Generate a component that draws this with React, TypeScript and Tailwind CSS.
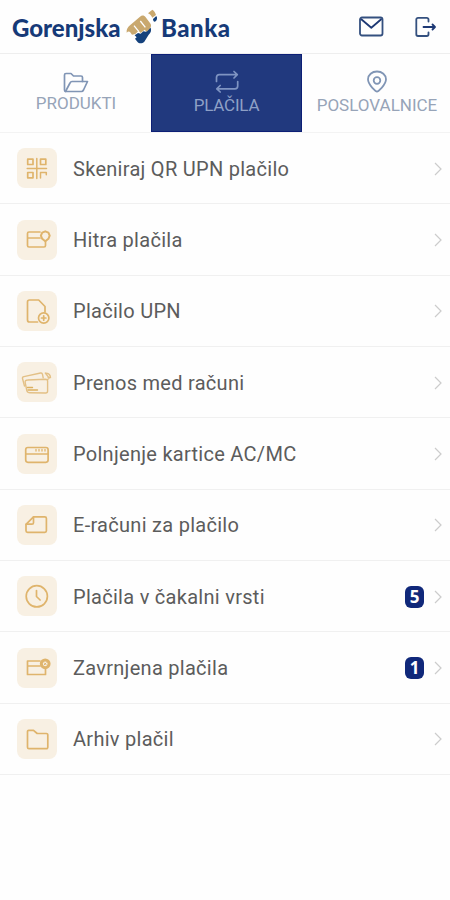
import type { ReactNode } from "react";

type Row = {
  label: string;
  icon: ReactNode;
  badge?: number;
};

function TileIcon({ children }: { children: ReactNode }) {
  return (
    <svg
      viewBox="0 0 40 40"
      className="h-10 w-10"
      fill="none"
      stroke="#dfb46c"
      strokeWidth={1.7}
      strokeLinecap="round"
      strokeLinejoin="round"
    >
      {children}
    </svg>
  );
}

const ROWS: Row[] = [
  {
    label: "Skeniraj QR UPN plačilo",
    icon: (
      <TileIcon>
        <path d="M10.7 11.2h5.3v5.3h-5.3zM23.500 11.2h5.3v5.3h-5.3zM10.700 24.500h5.3v5.3h-5.3z" />
        <path d="M19.800 10.500v20M10.200 20.500h19.300" strokeWidth={1.5} />
        <path d="M23.500 30v-5.500h5.800v2.300" strokeWidth={1.5} />
      </TileIcon>
    ),
  },
  {
    label: "Hitra plačila",
    icon: (
      <TileIcon>
        <path d="M23 12H12a1.5 1.5 0 0 0-1.5 1.5v12A1.5 1.5 0 0 0 12 27h15a1.5 1.5 0 0 0 1.5-1.5V21M10.5 18H23" />
        <path d="M28.3 11.3l3.1 1.3 1.3 3.1-1.3 3.1-3.1 2.5-3.1-2.5-1.3-3.1 1.3-3.1z" strokeWidth={2} />
      </TileIcon>
    ),
  },
  {
    label: "Plačilo UPN",
    icon: (
      <TileIcon>
        <path d="M20.5 31h-8a2 2 0 0 1-2-2V11a2 2 0 0 1 2-2h9.200l6.300 6.500V21" />
        <circle cx="26.7" cy="27" r="5.2" />
        <path d="M26.7 24.8v4.4M24.5 27h4.4" />
      </TileIcon>
    ),
  },
  {
    label: "Prenos med računi",
    icon: (
      <TileIcon>
        <g strokeWidth={1.4} stroke="#e3c086">
          <path d="M7.500 24L5.500 16.500c-.3-1 .4-1.700 1.400-1.900L23.500 11c1-.2 1.800.3 2 1.300l.7 3.500" />
          <path d="M10.500 18l17.800-.8c1.500 0 2.300.6 2.300 1.700v10.200c0 1.100-.8 1.900-1.900 1.900l-15.700-.2c-1.500 0-2.800-.8-3.200-2.200l-1.600-7.900c-.4-1.700.5-2.700 2.300-2.700z" />
          <path d="M10.500 25.500h5M11 28h9.500" stroke="#dcb060" />
          <path d="M28.300 11l3.200 4.200M29.500 11.300c2.500.3 3.800 1.700 4 4.200l-2.500-.3M30.500 17.500l1.500-1" />
        </g>
      </TileIcon>
    ),
  },
  {
    label: "Polnjenje kartice AC/MC",
    icon: (
      <TileIcon>
        <rect x="8.7" y="13.5" width="22.4" height="14.8" rx="2.2" />
        <path d="M9 20h22" />
        <path d="M19 15.500v1.500M22 15.500v1.500M25 15.500v1.500M28 15.500v1.500" strokeWidth={1.3} />
      </TileIcon>
    ),
  },
  {
    label: "E-računi za plačilo",
    icon: (
      <TileIcon>
        <path d="M16.500 11.800h11.300a1.600 1.600 0 0 1 1.600 1.600v12.400a1.600 1.600 0 0 1-1.600 1.600H10.600A1.600 1.600 0 0 1 9 25.800v-6.500z" />
        <path d="M16.500 12v5.700a1.500 1.500 0 0 1-1.500 1.500H9.300" />
      </TileIcon>
    ),
  },
  {
    label: "Plačila v čakalni vrsti",
    badge: 5,
    icon: (
      <TileIcon>
        <circle cx="19.8" cy="20.3" r="10.6" />
        <path d="M19.500 14.500v6l3.600 3.500" />
      </TileIcon>
    ),
  },
  {
    label: "Zavrnjena plačila",
    badge: 1,
    icon: (
      <TileIcon>
        <path d="M23 13H10.500v13.500h18V21M10.500 18H23" />
        <circle cx="28.2" cy="15.8" r="3.9" strokeWidth={3} />
        <path d="M27.2 14.8l2 2M29.2 14.8l-2 2" strokeWidth={1} />
      </TileIcon>
    ),
  },
  {
    label: "Arhiv plačil",
    icon: (
      <TileIcon>
        <path d="M10.500 12.500a1.200 1.200 0 0 1 1.200-1.200h4.800l3.700 3.200h9.200a1.400 1.400 0 0 1 1.400 1.400v12.400a1.400 1.400 0 0 1-1.400 1.400H12a1.500 1.500 0 0 1-1.500-1.500z" />
      </TileIcon>
    ),
  },
];

function LogoMark() {
  return (
    <svg viewBox="0 0 126 126" className="h-[42px] w-[42px] shrink-0">
      <path
        d="M38 88l10-7 8 2 8-7 8 1 10-11 4-1c3 9 0 15-6 21L67 107c-7 6-16 6-21 0l-7-9 5-4z"
        fill="#14417c"
      />
      <path
        d="M14 80c-1-10 3-16 10-22l30-26c6-5 13-4 17 2l13 17c5 6 4 12-1 17l-9 9-6-6-7 6-5 4-6-7-10 10-10 2-6-8c-3-3-6-2-10 2z"
        fill="#c9a86e"
      />
      <path d="M36 59l14 17M55 45l15 19" stroke="#fefefe" strokeWidth={4} />
      <path d="M78 22l13-11c6 4 9 9 11 16l-11 8c-3-6-7-10-13-13z" fill="#c9a86e" />
      <path d="M93 39l10-9c4 6 3 13-4 17-3 1-6-3-6-8z" fill="#14417c" />
    </svg>
  );
}

function Header() {
  return (
    <header className="flex h-[54px] items-center border-b border-[#eeeeee] px-3 text-[#163a78]">
      <div className="flex items-center font-['Lato',sans-serif] text-[24px] font-black leading-none">
        <span className="w-[110px] pt-[2px]">Gorenjska</span>
        <LogoMark />
        <span className="-ml-[3px] pt-[2px] tracking-[0.5px]">Banka</span>
      </div>
      <svg
        viewBox="0 0 28 24"
        className="ml-auto h-6 w-7"
        fill="none"
        stroke="#34507f"
        strokeWidth={1.8}
        strokeLinejoin="round"
      >
        <rect x="2" y="2.5" width="22.5" height="18" rx="2" />
        <path d="M3 4l10.300 8.700L23.500 4" stroke="#1d3874" />
      </svg>
      <svg
        viewBox="0 0 24 24"
        className="ml-7 h-6 w-6"
        fill="none"
        stroke="#34507f"
        strokeWidth={1.8}
        strokeLinecap="round"
        strokeLinejoin="round"
      >
        <path d="M14.500 6.500V4.500a1.700 1.700 0 0 0-1.700-1.700H4a1.700 1.700 0 0 0-1.700 1.700v14.800A1.700 1.700 0 0 0 4 21h8.800a1.700 1.700 0 0 0 1.700-1.700v-2" />
        <path d="M9.500 12h11M18.500 9.500l2.500 2.500-2.500 2.500" stroke="#1d3874" />
      </svg>
    </header>
  );
}

function Tabs() {
  return (
    <nav className="grid h-[79px] grid-cols-[151px_151px_148px] border-b border-[#f3f3f3] text-[17px] leading-5 text-[#97a4b8]">
      <div className="flex flex-col items-center pl-px pt-[17px]">
        <svg viewBox="0 0 26 22" className="h-[22px] w-[26px]" fill="none" stroke="#8095b5" strokeWidth={1.7} strokeLinejoin="round" strokeLinecap="round">
          <path d="M2.500 20.500c-.7-.2-1-.7-1-1.500V4c0-1 .5-1.500 1.500-1.500h5L10.500 5H18c1 0 1.500.5 1.500 1.500v4" />
          <path d="M2.500 20.500l4.500-8.500c.5-1 1-1.500 2-1.500h15.500l-4 8.500c-.5 1-1 1.500-2 1.500z" />
        </svg>
        <span>PRODUKTI</span>
      </div>
      <div className="flex flex-col items-center border border-[#0d1f76] bg-[#21397e] pt-[15px] text-[#8ea0c6]">
        <svg viewBox="0 0 24 24" className="h-6 w-6" fill="none" stroke="#7f94c2" strokeWidth={1.7} strokeLinejoin="round" strokeLinecap="round">
          <path d="M1.500 11.500V7.500c0-1.800 1-2.800 2.800-2.800H22M19 1.500l3.300 3.200L19 8" />
          <path d="M22.700 11.500v4.500c0 1.800-1 2.800-2.800 2.800H2M5.200 15.500L1.800 18.800l3.400 3.200" />
        </svg>
        <span className="mt-px tracking-[-0.2px]">PLAČILA</span>
      </div>
      <div className="flex flex-col items-center pl-[2px] pt-[16px]">
        <svg viewBox="0 0 22 24" className="h-6 w-[22px]" fill="none" stroke="#8095b5" strokeWidth={1.8} strokeLinejoin="round">
          <path d="M11 21.500c-1 0-9-6.500-9-12.200C2 4.800 6 1.500 11 1.500s9 3.300 9 7.800C20 15 12 21.500 11 21.500z" />
          <circle cx="11" cy="10.500" r="3.3" />
        </svg>
        <span className="mt-px">POSLOVALNICE</span>
      </div>
    </nav>
  );
}

export default function App() {
  return (
    <div className="min-h-[900px] w-[450px] bg-[#fefefe] font-['Roboto',sans-serif]">
      <Header />
      <Tabs />
      <ul>
        {ROWS.map((row) => (
          <li
            key={row.label}
            className="flex h-[71.35px] items-center border-b border-[#f0f0f0] pl-[17px] pr-2"
          >
            <div className="h-10 w-10 rounded-lg bg-[#f8f0e3]">{row.icon}</div>
            <span className="ml-4 pt-px text-[20px] tracking-[0.28px] text-[#5c5c5c]">{row.label}</span>
            <div className="ml-auto flex items-center gap-[10px] pt-px">
              {row.badge !== undefined && (
                <span className="flex h-[22px] w-[19px] items-center justify-center rounded-[6px] bg-[#10287a] font-['Open_Sans',sans-serif] text-[17px] font-bold text-white">
                  {row.badge}
                </span>
              )}
              <svg viewBox="0 0 8 14" className="h-[14px] w-2" fill="none" stroke="#cccccc" strokeWidth={1.2}>
                <path d="M1 1l6 6-6 6" />
              </svg>
            </div>
          </li>
        ))}
      </ul>
    </div>
  );
}
